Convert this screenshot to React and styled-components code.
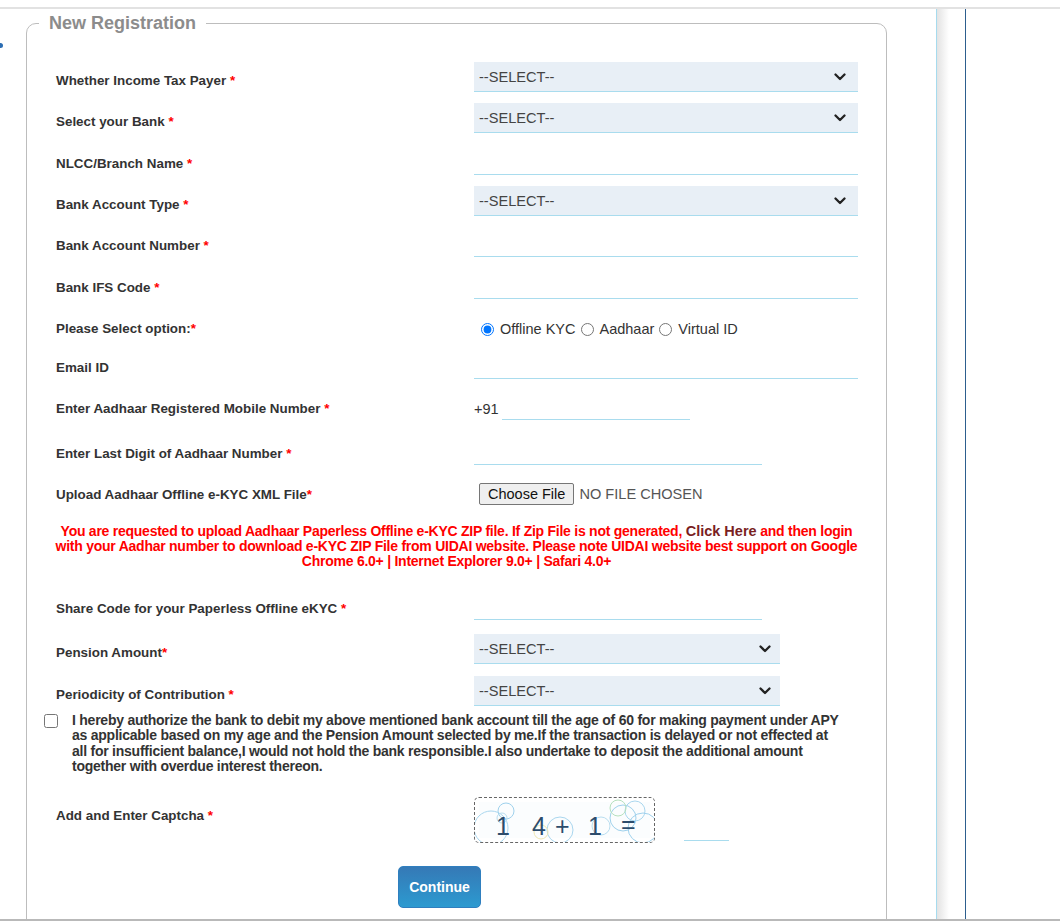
import React from 'react'
import styled, { createGlobalStyle } from 'styled-components'

const GlobalStyle = createGlobalStyle`
    html, body {
        margin: 0;
        padding: 0;
        background: #fff;
    }
    body {
        font-family: "Liberation Sans", Arial, sans-serif;
    }
    * {
        box-sizing: border-box;
    }
`

const Chevron = () => (
    <svg width='12' height='8' viewBox='0 0 12 8'>
        <path d='M1.5 1.5 L6 6 L10.5 1.5' fill='none' stroke='#222' strokeWidth='2.3' strokeLinecap='round' strokeLinejoin='round' />
    </svg>
)

const Select = ({ width, arrowRight = 12 }) => (
    <SelectWrap $width={width}>
        <NativeSelect defaultValue=''>
            <option value=''>--SELECT--</option>
        </NativeSelect>
        <ChevronSlot $right={arrowRight}>
            <Chevron />
        </ChevronSlot>
    </SelectWrap>
)

const Captcha = () => (
    <CaptchaBox>
        <svg width='179' height='44' viewBox='0 0 179 44'>
            <rect x='4' y='4' width='171' height='36' fill='#fbfdfe' />
            <g fill='none' strokeWidth='1'>
                <circle cx='16' cy='30' r='17' stroke='#a9d6ee' />
                <circle cx='31' cy='13' r='8' stroke='#9fd1ec' />
                <circle cx='27' cy='20' r='5' stroke='#b9def0' />
                <circle cx='85' cy='32' r='13' stroke='#a9d6ee' />
                <circle cx='66' cy='34' r='7' stroke='#efe6b0' />
                <circle cx='148' cy='20' r='13' stroke='#9fd1ec' />
                <circle cx='160' cy='13' r='10' stroke='#a9d6ee' />
                <circle cx='143' cy='10' r='8' stroke='#b5e0bd' />
                <circle cx='168' cy='30' r='15' stroke='#9fd1ec' />
                <circle cx='126' cy='28' r='9' stroke='#b9def0' />
            </g>
            <g fill='#2c4c6c' fontFamily='"Liberation Sans", Arial, sans-serif' fontSize='25'>
                <text x='21' y='37'>1</text>
                <text x='57' y='37'>4</text>
                <text x='80' y='37'>+</text>
                <text x='113' y='37'>1</text>
                <text x='146' y='35'>=</text>
            </g>
        </svg>
    </CaptchaBox>
)

const App = () => {
    return (
        <Page>
            <GlobalStyle />
            <TopRule />
            <Main>
                <LeftCol>
                    <Marker />
                    <Fieldset>
                        <Legend>New Registration</Legend>
                        <Form>
                            <Row $h={41}>
                                <Label>Whether Income Tax Payer <Req>*</Req></Label>
                                <Select width={384} />
                            </Row>
                            <Row $h={42}>
                                <Label>Select your Bank <Req>*</Req></Label>
                                <Select width={384} />
                            </Row>
                            <Row $h={41}>
                                <Label>NLCC/Branch Name <Req>*</Req></Label>
                                <TextInput $width={384} />
                            </Row>
                            <Row $h={41}>
                                <Label>Bank Account Type <Req>*</Req></Label>
                                <Select width={384} />
                            </Row>
                            <Row $h={42}>
                                <Label>Bank Account Number <Req>*</Req></Label>
                                <TextInput $width={384} />
                            </Row>
                            <Row $h={41}>
                                <Label>Bank IFS Code <Req>*</Req></Label>
                                <TextInput $width={384} />
                            </Row>
                            <Row $h={39}>
                                <Label>Please Select option:<Req>*</Req></Label>
                                <RadioGroup>
                                    <RadioLabel>
                                        <input type='radio' name='kyc' defaultChecked />
                                        Offline KYC
                                    </RadioLabel>
                                    <RadioLabel>
                                        <input type='radio' name='kyc' />
                                        Aadhaar
                                    </RadioLabel>
                                    <RadioLabel>
                                        <input type='radio' name='kyc' />
                                        Virtual ID
                                    </RadioLabel>
                                </RadioGroup>
                            </Row>
                            <Row $h={41}>
                                <Label>Email ID</Label>
                                <TextInput $width={384} />
                            </Row>
                            <Row $h={45}>
                                <Label>Enter Aadhaar Registered Mobile Number <Req>*</Req></Label>
                                <Phone>
                                    <CountryCode>+91</CountryCode>
                                    <TextInput $width={188} />
                                </Phone>
                            </Row>
                            <Row $h={41}>
                                <Label>Enter Last Digit of Aadhaar Number <Req>*</Req></Label>
                                <TextInput $width={288} />
                            </Row>
                            <Row $h={41}>
                                <Label>Upload Aadhaar Offline e-KYC XML File<Req>*</Req></Label>
                                <FilePicker>
                                    <FileButton type='button'>Choose File</FileButton>
                                    <FileName>NO FILE CHOSEN</FileName>
                                </FilePicker>
                            </Row>
                            <Notice>
                                You are requested to upload Aadhaar Paperless Offline e-KYC ZIP file. If Zip File is not generated, <NoticeLink href='#'>Click Here</NoticeLink> and then login
                                <br />
                                with your Aadhar number to download e-KYC ZIP File from UIDAI website. Please note UIDAI website best support on Google
                                <br />
                                Chrome 6.0+ | Internet Explorer 9.0+ | Safari 4.0+
                            </Notice>
                            <Row $h={44}>
                                <Label>Share Code for your Paperless Offline eKYC <Req>*</Req></Label>
                                <TextInput $width={288} />
                            </Row>
                            <Row $h={42}>
                                <Label>Pension Amount<Req>*</Req></Label>
                                <Select width={306} arrowRight={9} />
                            </Row>
                            <Row $h={37}>
                                <Label>Periodicity of Contribution <Req>*</Req></Label>
                                <Select width={306} arrowRight={9} />
                            </Row>
                            <Consent>
                                <Check type='checkbox' />
                                <ConsentText>
                                    I hereby authorize the bank to debit my above mentioned bank account till the age of 60 for making payment under APY
                                    <br />
                                    as applicable based on my age and the Pension Amount selected by me.If the transaction is delayed or not effected at
                                    <br />
                                    all for insufficient balance,I would not hold the bank responsible.I also undertake to deposit the additional amount
                                    <br />
                                    together with overdue interest thereon.
                                </ConsentText>
                            </Consent>
                            <Row $h={46}>
                                <Label>Add and Enter Captcha <Req>*</Req></Label>
                                <CaptchaField>
                                    <Captcha />
                                    <CaptchaInput />
                                </CaptchaField>
                            </Row>
                            <ContinueButton type='button'>Continue</ContinueButton>
                        </Form>
                    </Fieldset>
                </LeftCol>
                <SideStrip />
            </Main>
            <BottomRule />
        </Page>
    )
}

const Page = styled.div`
    height: 921px;
    display: flex;
    flex-direction: column;
    overflow: hidden;
`
const TopRule = styled.div`
    flex: none;
    height: 9px;
    border-bottom: 2px solid #e2e2e2;
`
const Main = styled.div`
    flex: 1;
    min-height: 0;
    display: flex;
    overflow: hidden;
`
const BottomRule = styled.div`
    flex: none;
    height: 2px;
    background: #b9b9b9;
`
const LeftCol = styled.div`
    flex: none;
    width: 936px;
    display: flex;
    align-items: flex-start;
`
const Marker = styled.span`
    flex: none;
    width: 3px;
    height: 5px;
    margin-top: 34px;
    background: #2b6db3;
    border-radius: 0 3px 3px 0;
`
const SideStrip = styled.div`
    flex: none;
    width: 30px;
    border-left: 1px solid #a6dbee;
    border-right: 1px solid #2d5e8e;
    background: linear-gradient(90deg, #e3e3e3 0, #fff 12px);
`
const Fieldset = styled.fieldset`
    flex: none;
    width: 861px;
    min-height: 1000px;
    margin: 3px 0 0 23px;
    padding: 0;
    border: 1px solid #bdbdbd;
    border-radius: 10px;
`
const Legend = styled.legend`
    margin-left: 12px;
    padding: 0 10px;
    font-size: 18px;
    line-height: 22px;
    font-weight: bold;
    color: #8c8c8c;
`
const Form = styled.div`
    padding: 28px 0 0 29px;
`
const Row = styled.div`
    display: grid;
    grid-template-columns: 418px auto;
    align-items: start;
    height: ${p => p.$h}px;
`
const Label = styled.div`
    padding-top: 11px;
    font-size: 13.4px;
    line-height: 15px;
    font-weight: bold;
    color: #333;
`
const Req = styled.span`
    color: #f00;
`
const SelectWrap = styled.div`
    position: relative;
    width: ${p => p.$width}px;
`
const NativeSelect = styled.select`
    appearance: none;
    display: block;
    width: 100%;
    height: 30px;
    margin: 0;
    padding: 0 30px 0 5px;
    border: 0;
    border-bottom: 1px solid #a9dcee;
    border-radius: 0;
    background: #e8eff6;
    font-family: "Liberation Sans", Arial, sans-serif;
    font-size: 14.6px;
    color: #444;
    outline: none;
`
const ChevronSlot = styled.span`
    position: absolute;
    right: ${p => p.$right}px;
    top: 11px;
    display: flex;
    pointer-events: none;
`
const TextInput = styled.input`
    display: block;
    width: ${p => p.$width}px;
    height: 30px;
    margin: 0;
    padding: 0 5px;
    border: 0;
    border-bottom: 1px solid #a9dcee;
    background: transparent;
    font-family: "Liberation Sans", Arial, sans-serif;
    font-size: 14px;
    outline: none;
`
const RadioGroup = styled.div`
    display: flex;
    align-items: center;
    padding: 11px 0 0 7px;
    font-size: 14.5px;
    line-height: 16px;
    color: #333;
`
const RadioLabel = styled.label`
    display: flex;
    align-items: center;
    margin-right: 5px;
    input {
        width: 13px;
        height: 13px;
        margin: 0 6px 0 0;
    }
`
const Phone = styled.div`
    display: flex;
    align-items: flex-start;
`
const CountryCode = styled.span`
    width: 28px;
    padding-top: 11px;
    font-size: 14.5px;
    line-height: 16px;
    color: #333;
`
const FilePicker = styled.div`
    display: flex;
    align-items: center;
    padding: 7px 0 0 5px;
`
const FileButton = styled.button`
    height: 22px;
    padding: 0 8px;
    border: 1px solid #767676;
    border-radius: 2px;
    background: #efefef;
    font-family: "Liberation Sans", Arial, sans-serif;
    font-size: 14.5px;
    color: #111;
`
const FileName = styled.span`
    margin-left: 5px;
    font-size: 14.6px;
    color: #555;
`
const Notice = styled.p`
    margin: 0 0 0 -29px;
    padding: 7px 0 21px;
    text-align: center;
    font-size: 14px;
    line-height: 15px;
    letter-spacing: -0.25px;
    font-weight: bold;
    color: #f00;
`
const NoticeLink = styled.a`
    font-size: 14.5px;
    letter-spacing: 0;
    color: #7a1f1f;
    text-decoration: none;
`
const Consent = styled.div`
    display: flex;
    align-items: flex-start;
    margin: 0 0 23px -12px;
`
const Check = styled.input`
    flex: none;
    width: 14px;
    height: 14px;
    margin: 1px 14px 0 0;
`
const ConsentText = styled.p`
    margin: 0;
    font-size: 14px;
    line-height: 15.3px;
    letter-spacing: -0.24px;
    font-weight: bold;
    color: #333;
`
const CaptchaField = styled.div`
    display: flex;
    align-items: flex-end;
`
const CaptchaBox = styled.div`
    width: 181px;
    height: 46px;
    border: 1px dashed #666;
    border-radius: 5px;
    display: flex;
    overflow: hidden;
`
const CaptchaInput = styled.input`
    width: 45px;
    height: 30px;
    margin: 0 0 2px 29px;
    border: 0;
    border-bottom: 1px solid #a9dcee;
    outline: none;
`
const ContinueButton = styled.button`
    display: block;
    width: 83px;
    height: 42px;
    margin: 23px 0 0 342px;
    border: 1px solid #2f7fbf;
    border-radius: 5px;
    background: linear-gradient(180deg, #3579b6 0%, #2c9ad0 100%);
    font-family: "Liberation Sans", Arial, sans-serif;
    font-size: 14px;
    font-weight: bold;
    color: #fff;
`

export default App
